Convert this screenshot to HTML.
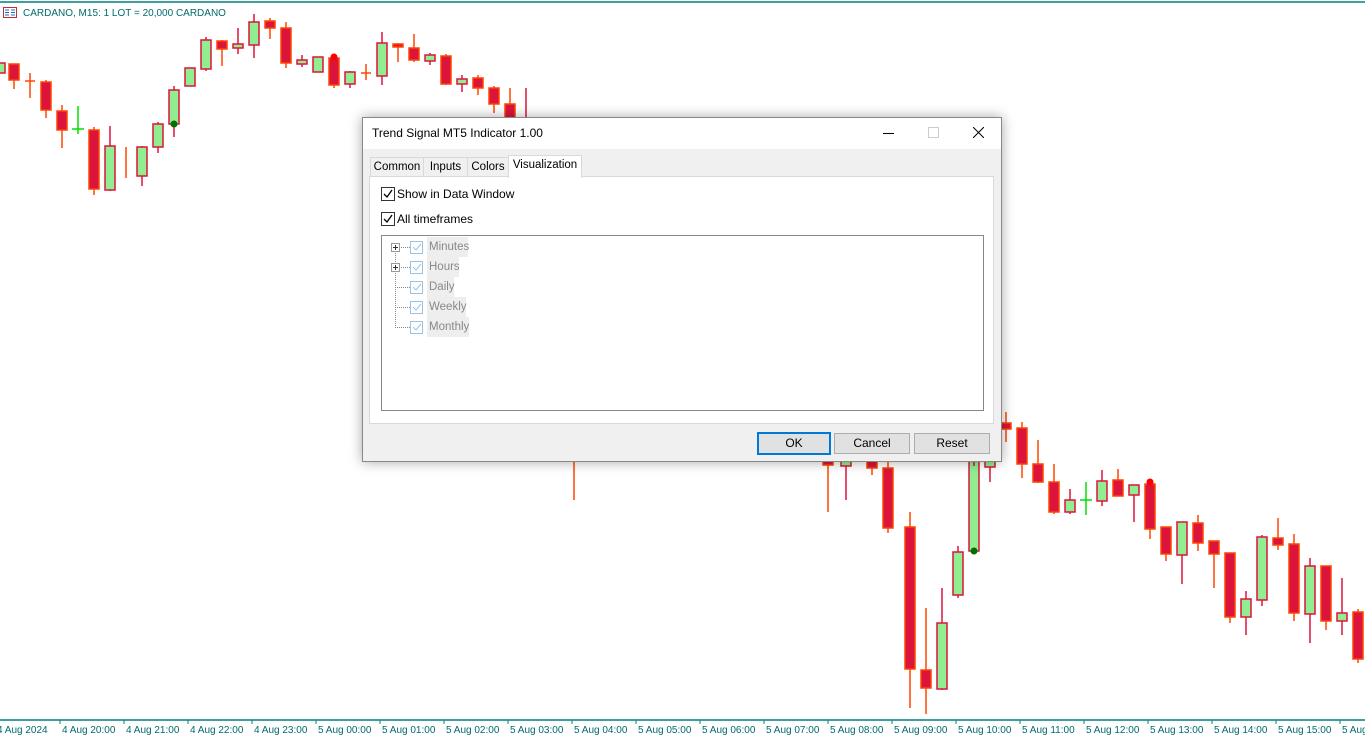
<!DOCTYPE html>
<html><head><meta charset="utf-8"><style>
body{margin:0;width:1365px;height:741px;background:#fff;position:relative;overflow:hidden;font-family:"Liberation Sans",sans-serif}
.dlg{position:absolute;left:362px;top:117px;width:638px;height:343px;background:#f0f0f0;border:1px solid #888;box-shadow:0 0 12px rgba(0,0,0,.35);font-size:12px;color:#000}
.tb{position:absolute;left:0;top:0;width:638px;height:31px;background:#fff}
.tab{position:absolute;top:39px;height:19px;border:1px solid #d9d9d9;border-bottom:none;background:#f0f0f0;line-height:19px;text-align:center;font-size:11.5px}
.panel{position:absolute;left:6px;top:58px;width:623px;height:246px;background:#fff;border:1px solid #d9d9d9}
.cb{position:absolute;width:12px;height:12px;border:1px solid #333;background:#fff}
.btn{position:absolute;top:315px;height:19px;border:1px solid #adadad;background:#e1e1e1;text-align:center;line-height:19px}
</style></head><body>
<svg width="1365" height="741" style="position:absolute;left:0;top:0">
<line x1="0" y1="2" x2="1365" y2="2" stroke="#008080" stroke-width="1.5"/>
<g stroke-width="1.5">
<g stroke="#DC143C" fill="#90EE90">
<rect x="-5" y="63" width="10" height="10"/>
<line x1="110" y1="126" x2="110" y2="191"/><rect x="105" y="146" width="10" height="44"/>
<line x1="142" y1="146" x2="142" y2="186"/><rect x="137" y="147" width="10" height="29"/>
<line x1="158" y1="122" x2="158" y2="153"/><rect x="153" y="124" width="10" height="23"/>
<line x1="174" y1="86" x2="174" y2="137"/><rect x="169" y="90" width="10" height="34"/>
<rect x="185" y="68" width="10" height="18"/>
<line x1="206" y1="37" x2="206" y2="71"/><rect x="201" y="40" width="10" height="29"/>
<line x1="238" y1="28" x2="238" y2="54"/><rect x="233" y="44" width="10" height="4"/>
<line x1="254" y1="14" x2="254" y2="58"/><rect x="249" y="22" width="10" height="23"/>
<line x1="302" y1="55" x2="302" y2="67"/><rect x="297" y="60" width="10" height="4"/>
<rect x="313" y="57" width="10" height="15"/>
<line x1="350" y1="71" x2="350" y2="88"/><rect x="345" y="72" width="10" height="12"/>
<line x1="382" y1="32" x2="382" y2="85"/><rect x="377" y="43" width="10" height="33"/>
<line x1="430" y1="53" x2="430" y2="65"/><rect x="425" y="55" width="10" height="6"/>
<line x1="462" y1="75" x2="462" y2="92"/><rect x="457" y="79" width="10" height="5"/>
<line x1="846" y1="455" x2="846" y2="500"/><rect x="841" y="455" width="10" height="11"/>
<line x1="942" y1="588" x2="942" y2="690"/><rect x="937" y="623" width="10" height="66"/>
<line x1="958" y1="546" x2="958" y2="598"/><rect x="953" y="552" width="10" height="43"/>
<rect x="969" y="460" width="10" height="91"/>
<line x1="990" y1="455" x2="990" y2="482"/><rect x="985" y="455" width="10" height="12"/>
<line x1="1070" y1="489" x2="1070" y2="514"/><rect x="1065" y="500" width="10" height="12"/>
<line x1="1102" y1="470" x2="1102" y2="506"/><rect x="1097" y="481" width="10" height="20"/>
<line x1="1134" y1="485" x2="1134" y2="522"/><rect x="1129" y="485" width="10" height="10"/>
<line x1="1182" y1="522" x2="1182" y2="584"/><rect x="1177" y="522" width="10" height="33"/>
<line x1="1246" y1="591" x2="1246" y2="635"/><rect x="1241" y="599" width="10" height="18"/>
<line x1="1262" y1="535" x2="1262" y2="606"/><rect x="1257" y="537" width="10" height="63"/>
<line x1="1310" y1="558" x2="1310" y2="643"/><rect x="1305" y="566" width="10" height="48"/>
<line x1="1342" y1="578" x2="1342" y2="635"/><rect x="1337" y="613" width="10" height="8"/>
</g>
<g stroke="#FF4500" fill="#DC143C">
<line x1="14" y1="64" x2="14" y2="89"/><rect x="9" y="64" width="10" height="16"/>
<line x1="30" y1="73" x2="30" y2="98"/><line x1="25" y1="81" x2="35" y2="81"/>
<line x1="46" y1="80" x2="46" y2="118"/><rect x="41" y="82" width="10" height="28"/>
<line x1="62" y1="105" x2="62" y2="148"/><rect x="57" y="111" width="10" height="19"/>
<line x1="94" y1="127" x2="94" y2="195"/><rect x="89" y="130" width="10" height="59"/>
<line x1="126" y1="147" x2="126" y2="178"/>
<line x1="222" y1="40" x2="222" y2="66"/><rect x="217" y="41" width="10" height="8"/>
<line x1="270" y1="18" x2="270" y2="39"/><rect x="265" y="21" width="10" height="7"/>
<line x1="286" y1="22" x2="286" y2="68"/><rect x="281" y="28" width="10" height="35"/>
<line x1="334" y1="56" x2="334" y2="88"/><rect x="329" y="58" width="10" height="27"/>
<line x1="366" y1="64" x2="366" y2="80"/><line x1="361" y1="73" x2="371" y2="73"/>
<line x1="398" y1="43" x2="398" y2="62"/><rect x="393" y="44" width="10" height="3"/>
<line x1="414" y1="34" x2="414" y2="62"/><rect x="409" y="48" width="10" height="12"/>
<line x1="446" y1="54" x2="446" y2="85"/><rect x="441" y="56" width="10" height="28"/>
<line x1="478" y1="75" x2="478" y2="95"/><rect x="473" y="78" width="10" height="10"/>
<line x1="494" y1="86" x2="494" y2="113"/><rect x="489" y="88" width="10" height="16"/>
<line x1="510" y1="88" x2="510" y2="118"/><rect x="505" y="104" width="10" height="14"/>
<line x1="574" y1="455" x2="574" y2="500"/>
<line x1="828" y1="455" x2="828" y2="512"/><rect x="823" y="455" width="10" height="10"/>
<line x1="872" y1="455" x2="872" y2="475"/><rect x="867" y="455" width="10" height="13"/>
<line x1="888" y1="455" x2="888" y2="533"/><rect x="883" y="468" width="10" height="60"/>
<line x1="910" y1="512" x2="910" y2="708"/><rect x="905" y="527" width="10" height="142"/>
<line x1="926" y1="608" x2="926" y2="714"/><rect x="921" y="670" width="10" height="18"/>
<line x1="1006" y1="412" x2="1006" y2="442"/><rect x="1001" y="423" width="10" height="6"/>
<line x1="1022" y1="422" x2="1022" y2="478"/><rect x="1017" y="428" width="10" height="36"/>
<line x1="1038" y1="440" x2="1038" y2="483"/><rect x="1033" y="464" width="10" height="18"/>
<line x1="1054" y1="464" x2="1054" y2="514"/><rect x="1049" y="482" width="10" height="30"/>
<line x1="1118" y1="469" x2="1118" y2="496"/><rect x="1113" y="480" width="10" height="16"/>
<line x1="1150" y1="482" x2="1150" y2="539"/><rect x="1145" y="484" width="10" height="45"/>
<line x1="1166" y1="527" x2="1166" y2="561"/><rect x="1161" y="527" width="10" height="27"/>
<line x1="1198" y1="515" x2="1198" y2="551"/><rect x="1193" y="523" width="10" height="20"/>
<line x1="1214" y1="541" x2="1214" y2="588"/><rect x="1209" y="541" width="10" height="13"/>
<line x1="1230" y1="553" x2="1230" y2="623"/><rect x="1225" y="553" width="10" height="64"/>
<line x1="1278" y1="518" x2="1278" y2="550"/><rect x="1273" y="538" width="10" height="7"/>
<line x1="1294" y1="534" x2="1294" y2="621"/><rect x="1289" y="544" width="10" height="69"/>
<line x1="1326" y1="566" x2="1326" y2="630"/><rect x="1321" y="566" width="10" height="55"/>
<line x1="1358" y1="609" x2="1358" y2="663"/><rect x="1353" y="612" width="10" height="47"/>
</g>
<g stroke="#DC143C"><line x1="526" y1="88" x2="526" y2="120"/><line x1="974" y1="455" x2="974" y2="466"/></g>
<g stroke="#00E000"><line x1="78" y1="106" x2="78" y2="134"/><line x1="72" y1="129" x2="84" y2="129"/><line x1="1086" y1="482" x2="1086" y2="515"/><line x1="1080" y1="500" x2="1092" y2="500"/></g>
</g>
<circle cx="174" cy="124" r="3.5" fill="#007000"/><circle cx="974" cy="551" r="3.5" fill="#007000"/>
<circle cx="334" cy="57" r="3.5" fill="#f00"/><circle cx="1150" cy="482" r="3.5" fill="#f00"/>
<line x1="0" y1="720" x2="1365" y2="720" stroke="#008080" stroke-width="1.5"/>
<g stroke="#008080"><line x1="60" y1="720" x2="60" y2="724"/><line x1="124" y1="720" x2="124" y2="724"/><line x1="188" y1="720" x2="188" y2="724"/><line x1="252" y1="720" x2="252" y2="724"/><line x1="316" y1="720" x2="316" y2="724"/><line x1="380" y1="720" x2="380" y2="724"/><line x1="444" y1="720" x2="444" y2="724"/><line x1="508" y1="720" x2="508" y2="724"/><line x1="572" y1="720" x2="572" y2="724"/><line x1="636" y1="720" x2="636" y2="724"/><line x1="700" y1="720" x2="700" y2="724"/><line x1="764" y1="720" x2="764" y2="724"/><line x1="828" y1="720" x2="828" y2="724"/><line x1="892" y1="720" x2="892" y2="724"/><line x1="956" y1="720" x2="956" y2="724"/><line x1="1020" y1="720" x2="1020" y2="724"/><line x1="1084" y1="720" x2="1084" y2="724"/><line x1="1148" y1="720" x2="1148" y2="724"/><line x1="1212" y1="720" x2="1212" y2="724"/><line x1="1276" y1="720" x2="1276" y2="724"/><line x1="1340" y1="720" x2="1340" y2="724"/></g>
<g fill="#006b6b" font-family="Liberation Sans, sans-serif" font-size="10">
<text x="-3" y="733">4 Aug 2024</text><text x="62" y="733">4 Aug 20:00</text><text x="126" y="733">4 Aug 21:00</text><text x="190" y="733">4 Aug 22:00</text><text x="254" y="733">4 Aug 23:00</text><text x="318" y="733">5 Aug 00:00</text><text x="382" y="733">5 Aug 01:00</text><text x="446" y="733">5 Aug 02:00</text><text x="510" y="733">5 Aug 03:00</text><text x="574" y="733">5 Aug 04:00</text><text x="638" y="733">5 Aug 05:00</text><text x="702" y="733">5 Aug 06:00</text><text x="766" y="733">5 Aug 07:00</text><text x="830" y="733">5 Aug 08:00</text><text x="894" y="733">5 Aug 09:00</text><text x="958" y="733">5 Aug 10:00</text><text x="1022" y="733">5 Aug 11:00</text><text x="1086" y="733">5 Aug 12:00</text><text x="1150" y="733">5 Aug 13:00</text><text x="1214" y="733">5 Aug 14:00</text><text x="1278" y="733">5 Aug 15:00</text><text x="1342" y="733">5 Aug</text>
<text x="23" y="16">CARDANO, M15:  1 LOT = 20,000 CARDANO</text></g>
<rect x="3.5" y="7.5" width="13" height="10" fill="#fff" stroke="#c03030"/>
<g stroke="#3060c0"><line x1="5" y1="10" x2="9" y2="10"/><line x1="5" y1="12.5" x2="9" y2="12.5"/><line x1="5" y1="15" x2="9" y2="15"/><line x1="11" y1="10" x2="15" y2="10"/><line x1="11" y1="12.5" x2="15" y2="12.5"/><line x1="11" y1="15" x2="15" y2="15"/></g>
</svg>

<div class="dlg">
 <div class="tb"><div style="position:absolute;left:9px;top:8px">Trend Signal MT5 Indicator 1.00</div>
  <div style="position:absolute;left:520px;top:15px;width:11px;height:1px;background:#000"></div>
  <div style="position:absolute;left:565px;top:9px;width:9px;height:9px;border:1px solid #ccc"></div>
  <svg style="position:absolute;left:610px;top:9px" width="11" height="11"><path d="M0 0L11 11M11 0L0 11" stroke="#000"/></svg>
 </div>
 <div class="tab" style="left:7px;width:52px">Common</div>
 <div class="tab" style="left:60px;width:43px">Inputs</div>
 <div class="tab" style="left:104px;width:40px">Colors</div>
 <div class="tab" style="left:145px;top:37px;height:22px;width:72px;background:#fff;line-height:19px;z-index:2">Visualization</div>
 <div class="panel">
  <div class="cb" style="left:11px;top:10px"></div><svg style="position:absolute;left:13px;top:12px" width="10" height="10"><path d="M1 5L4 8L9 1" stroke="#000" fill="none" stroke-width="1.3"/></svg>
  <div style="position:absolute;left:27px;top:10px">Show in Data Window</div>
  <div class="cb" style="left:11px;top:35px"></div><svg style="position:absolute;left:13px;top:37px" width="10" height="10"><path d="M1 5L4 8L9 1" stroke="#000" fill="none" stroke-width="1.3"/></svg>
  <div style="position:absolute;left:27px;top:35px">All timeframes</div>
  <div style="position:absolute;left:11px;top:58px;width:601px;height:174px;border:1px solid #828790;background:#fff">
   <svg style="position:absolute;left:0;top:0" width="100" height="100">
    <g stroke="#888" stroke-dasharray="1,1" fill="none"><path d="M13.5 15V91.5H28"/><path d="M17 11.5H28M17 31.5H28M13 51.5H28M13 71.5H28"/></g>
    <g fill="#fff" stroke="#999"><rect x="9.5" y="7.5" width="8" height="8"/><rect x="9.5" y="27.5" width="8" height="8"/></g>
    <g stroke="#333"><path d="M11 11.5H16M13.5 9V14M11 31.5H16M13.5 29V34"/></g>
    <g fill="#fff" stroke="#9cc3e6"><rect x="28.5" y="5.5" width="12" height="12"/><rect x="28.5" y="25.5" width="12" height="12"/><rect x="28.5" y="45.5" width="12" height="12"/><rect x="28.5" y="65.5" width="12" height="12"/><rect x="28.5" y="85.5" width="12" height="12"/></g>
    <g stroke="#9cc3e6" fill="none"><path d="M31 11l3 3 5-6M31 31l3 3 5-6M31 51l3 3 5-6M31 71l3 3 5-6M31 91l3 3 5-6"/></g>
   </svg>
   <div style="position:absolute;left:45px;top:1px;width:41px;height:20px;background:#eee"></div>
   <div style="position:absolute;left:45px;top:21px;width:32px;height:20px;background:#eee"></div>
   <div style="position:absolute;left:45px;top:41px;width:27px;height:20px;background:#eee"></div>
   <div style="position:absolute;left:45px;top:61px;width:39px;height:20px;background:#eee"></div>
   <div style="position:absolute;left:45px;top:81px;width:42px;height:20px;background:#eee"></div>
   <div style="position:absolute;left:47px;top:1px;color:#888;line-height:20px;font-size:11.5px">Minutes<br>Hours<br>Daily<br>Weekly<br>Monthly</div>
  </div>
 </div>
 <div class="btn" style="left:394px;width:70px;border:2px solid #0078d7;top:314px">OK</div>
 <div class="btn" style="left:471px;width:74px">Cancel</div>
 <div class="btn" style="left:551px;width:74px">Reset</div>
</div>
</body></html>
